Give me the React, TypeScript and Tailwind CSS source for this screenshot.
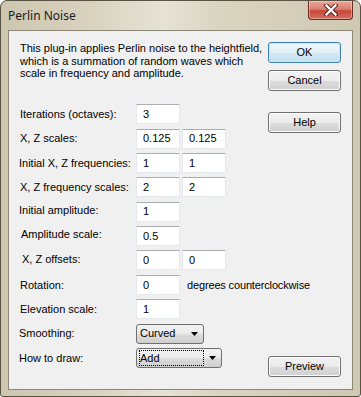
import React from "react";

const TAH = { fontFamily: '"Liberation Sans", Arial, sans-serif' };

function Box({ v, w = "w-[44px]" }: { v: string; w?: string }) {
  return (
    <div
      className={`${w} h-[20px] shrink-0 bg-white border border-[#e3e9ef] border-t-[#abadb3] rounded-[1px] flex items-center pl-[6px] text-[11px] text-black`}
    >
      {v}
    </div>
  );
}

function Btn({ label, def = false }: { label: string; def?: boolean }) {
  return (
    <div
      className={`w-[73px] h-[21px] rounded-[3px] border flex items-center justify-center text-[11px] text-black ${
        def
          ? "border-[#3c7fb1] bg-[linear-gradient(#eff7fc_0%,#e2f0f8_50%,#d3e8f4_51%,#c6e0ef_100%)] shadow-[inset_0_0_0_1px_#cbe8f8]"
          : "border-[#707070] bg-[linear-gradient(#f2f2f2_0%,#ebebeb_50%,#dddddd_51%,#cfcfcf_100%)] shadow-[inset_0_0_0_1px_#fcfcfc]"
      }`}
    >
      {label}
    </div>
  );
}

function Arrow() {
  return (
    <svg width="7" height="4" viewBox="0 0 7 4">
      <path d="M0 0H7L3.5 4Z" fill="#000" />
    </svg>
  );
}

function Row({
  label,
  children,
  lo = "",
}: {
  label: string;
  children: React.ReactNode;
  lo?: string;
}) {
  return (
    <div className="flex items-center h-[20px]">
      <div className={`w-[116px] shrink-0 text-[11px] text-black whitespace-nowrap ${lo}`}>{label}</div>
      {children}
    </div>
  );
}

export default function App() {
  return (
    <div
      className="w-[361px] h-[397px] relative rounded-t-[7px] rounded-b-[3px] border border-[#585343] bg-[linear-gradient(90deg,#cdc6af_0%,#d8d2bf_25%,#e6e2d5_45%,#dad4c2_60%,#cfc8b2_100%)] flex flex-col overflow-hidden"
      style={TAH}
    >
      <div className="h-[29px] flex items-start justify-between shrink-0">
        <div
          className="pl-[7px] pt-[6px] text-[12px] text-[#1b1b1b]"
          style={{ fontFamily: '"Noto Sans", "Open Sans", sans-serif' }}
        >
          Perlin Noise
        </div>
        <div className="mr-[7px] w-[45px] h-[19px] rounded-b-[4px] border border-t-0 border-[#6b2a22] bg-[linear-gradient(#e8a597_0%,#d98171_45%,#c7463a_55%,#d4705d_100%)] shadow-[inset_0_0_0_1px_rgba(255,255,255,0.35)] flex items-center justify-center">
          <svg width="14" height="12" viewBox="0 0 14 12">
            <path d="M2.5 1.5L11.5 10.5M11.5 1.5L2.5 10.5" stroke="#4a1a14" strokeWidth="4.2" strokeLinecap="square" />
            <path d="M2.5 1.5L11.5 10.5M11.5 1.5L2.5 10.5" stroke="#ffffff" strokeWidth="2.4" strokeLinecap="square" />
          </svg>
        </div>
      </div>
      <div className="mx-[7px] h-[360px] border border-[#8c8775] bg-[#f0f0f0] flex pl-[11px] pr-[11px]">
        <div className="flex-1 min-w-0 pt-[11px] flex flex-col">
          <p className="text-[11px] leading-[12.7px] text-black whitespace-nowrap">
            This plug-in applies Perlin noise to the heightfield,
            <br />
            which is a summation of random waves which
            <br />
            scale in frequency and amplitude.
          </p>
          <div className="mt-[24px] flex flex-col gap-[4.4px]">
            <Row label="Iterations (octaves):">
              <Box v="3" />
            </Row>
            <Row label="X, Z scales:">
              <Box v="0.125" />
              <div className="w-[2px] shrink-0" />
              <Box v="0.125" />
            </Row>
            <Row label="Initial X, Z frequencies:" lo="-ml-[1px] mr-[1px]">
              <Box v="1" />
              <div className="w-[2px] shrink-0" />
              <Box v="1" />
            </Row>
            <Row label="X, Z frequency scales:">
              <Box v="2" />
              <div className="w-[2px] shrink-0" />
              <Box v="2" />
            </Row>
            <Row label="Initial amplitude:" lo="-ml-[1px] mr-[1px] -mt-[3px]">
              <Box v="1" />
            </Row>
            <Row label="Amplitude scale:" lo="ml-[1px] -mt-[3px] -mr-[1px]">
              <Box v="0.5" />
            </Row>
            <Row label="X, Z offsets:" lo="ml-[2px] -mt-[2px] -mr-[2px]">
              <Box v="0" />
              <div className="w-[2px] shrink-0" />
              <Box v="0" />
            </Row>
            <Row label="Rotation:">
              <Box v="0" />
              <span className="ml-[7px] text-[11px] tracking-[-0.15px] text-black whitespace-nowrap">degrees counterclockwise</span>
            </Row>
            <Row label="Elevation scale:">
              <Box v="1" />
            </Row>
            <Row label="Smoothing:" lo="-ml-[1px] mr-[1px]">
              <div className="w-[68px] shrink-0 h-[20px] rounded-[3px] border border-[#707070] bg-[linear-gradient(#f2f2f2_0%,#ebebeb_50%,#dddddd_51%,#cfcfcf_100%)] flex items-center justify-between pl-[3px] pr-[5px] text-[11px] text-black">
                <span>Curved</span>
                <Arrow />
              </div>
            </Row>
            <Row label="How to draw:" lo="-ml-[1px] mr-[1px]">
              <div className="w-[86px] shrink-0 h-[20px] rounded-[3px] border border-[#707070] bg-[linear-gradient(#f2f2f2_0%,#ebebeb_50%,#dddddd_51%,#cfcfcf_100%)] flex items-center justify-between pl-[2px] pr-[5px] text-[11px] text-black">
                <span className="w-[65px] h-[16px] border border-dotted border-black flex items-center">Add</span>
                <Arrow />
              </div>
            </Row>
          </div>
        </div>
        <div className="w-[73px] shrink-0 pt-[11px] pb-[12px] flex flex-col">
          <Btn label="OK" def />
          <div className="h-[7px]" />
          <Btn label="Cancel" />
          <div className="h-[21px]" />
          <Btn label="Help" />
          <div className="mt-auto">
            <Btn label="Preview" />
          </div>
        </div>
      </div>
    </div>
  );
}
